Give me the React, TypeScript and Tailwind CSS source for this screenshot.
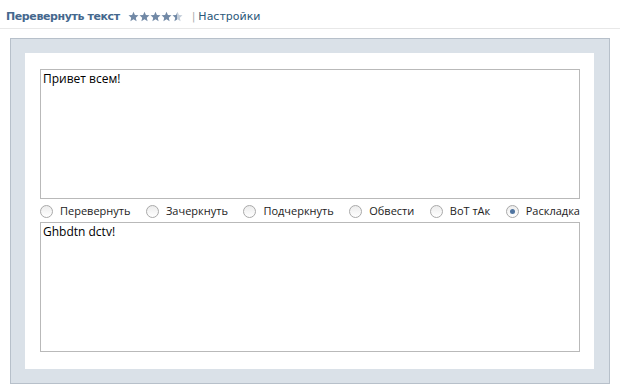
import React from 'react';

const Star = ({ half = false, id }: { half?: boolean; id: string }) => (
  <svg width="11" height="11" viewBox="0 0 24 24" className="shrink-0">
    {half && (
      <defs>
        <linearGradient id={id}>
          <stop offset="50%" stopColor="#7189a6" />
          <stop offset="50%" stopColor="#c3cdd9" />
        </linearGradient>
      </defs>
    )}
    <path
      d="M12 1.5l3.1 7.2 7.8.7-5.9 5.2 1.8 7.7L12 18.2l-6.8 4.1 1.8-7.7-5.9-5.2 7.8-.7z"
      fill={half ? `url(#${id})` : '#7189a6'}
    />
  </svg>
);

const options = ['Перевернуть', 'Зачеркнуть', 'Подчеркнуть', 'Обвести', 'ВоТ тАк', 'Раскладка'];

export default function App() {
  const font = { fontFamily: '"Open Sans", "Noto Sans", sans-serif' };
  return (
    <div className="w-[620px] h-[390px] bg-white overflow-hidden" style={{ fontFamily: 'Tahoma, "DejaVu Sans", sans-serif' }}>
      {/* header */}
      <div className="h-[29px] pt-[10px] pl-[6px] border-b border-[#e8e8e8] flex items-start text-[11px] leading-[14px]">
        <span className="font-bold text-[#45688e] tracking-[-0.4px]">Перевернуть текст</span>
        <div className="flex items-center ml-[8px] mt-[1px]">
          <Star id="s1" />
          <Star id="s2" />
          <Star id="s3" />
          <Star id="s4" />
          <Star id="s5" half />
        </div>
        <span className="ml-[9px] text-[#b0b0b0]">|</span>
        <span className="ml-[3px] text-[#2b587a]">Настройки</span>
      </div>

      {/* panel */}
      <div className="mt-[9px] ml-[10px] w-[600px] h-[346px] border border-[#b7c0ca] bg-[#dae1e8] pt-[14px] pl-[14px] pr-[15px] pb-[14px]">
        <div className="w-full h-full bg-white pt-[16px] pl-[15px]" style={font}>
          <textarea
            readOnly
            defaultValue="Привет всем!"
            className="block w-[540px] h-[130px] resize-none border border-[#b9b9b9] px-[2px] py-[1px] text-[12px] leading-[16px] text-black outline-none"
            style={font}
          />
          <div className="w-[540px] h-[23px] pt-[1px] flex items-center justify-between text-[11px] text-[#222]">
            {options.map((o, i) => (
              <label key={o} className="flex items-center gap-[7px]">
                <span className="w-[13px] h-[13px] rounded-full border border-[#a9a9a9] bg-gradient-to-b from-[#ececec] to-white flex items-center justify-center">
                  {i === 5 && <span className="w-[5px] h-[5px] rounded-full bg-[#4f74a0]" />}
                </span>
                <span>{o}</span>
              </label>
            ))}
          </div>
          <textarea
            readOnly
            defaultValue="Ghbdtn dctv!"
            className="block w-[540px] h-[130px] resize-none border border-[#b9b9b9] px-[2px] py-[1px] text-[12px] leading-[16px] text-black outline-none"
            style={font}
          />
        </div>
      </div>
    </div>
  );
}
